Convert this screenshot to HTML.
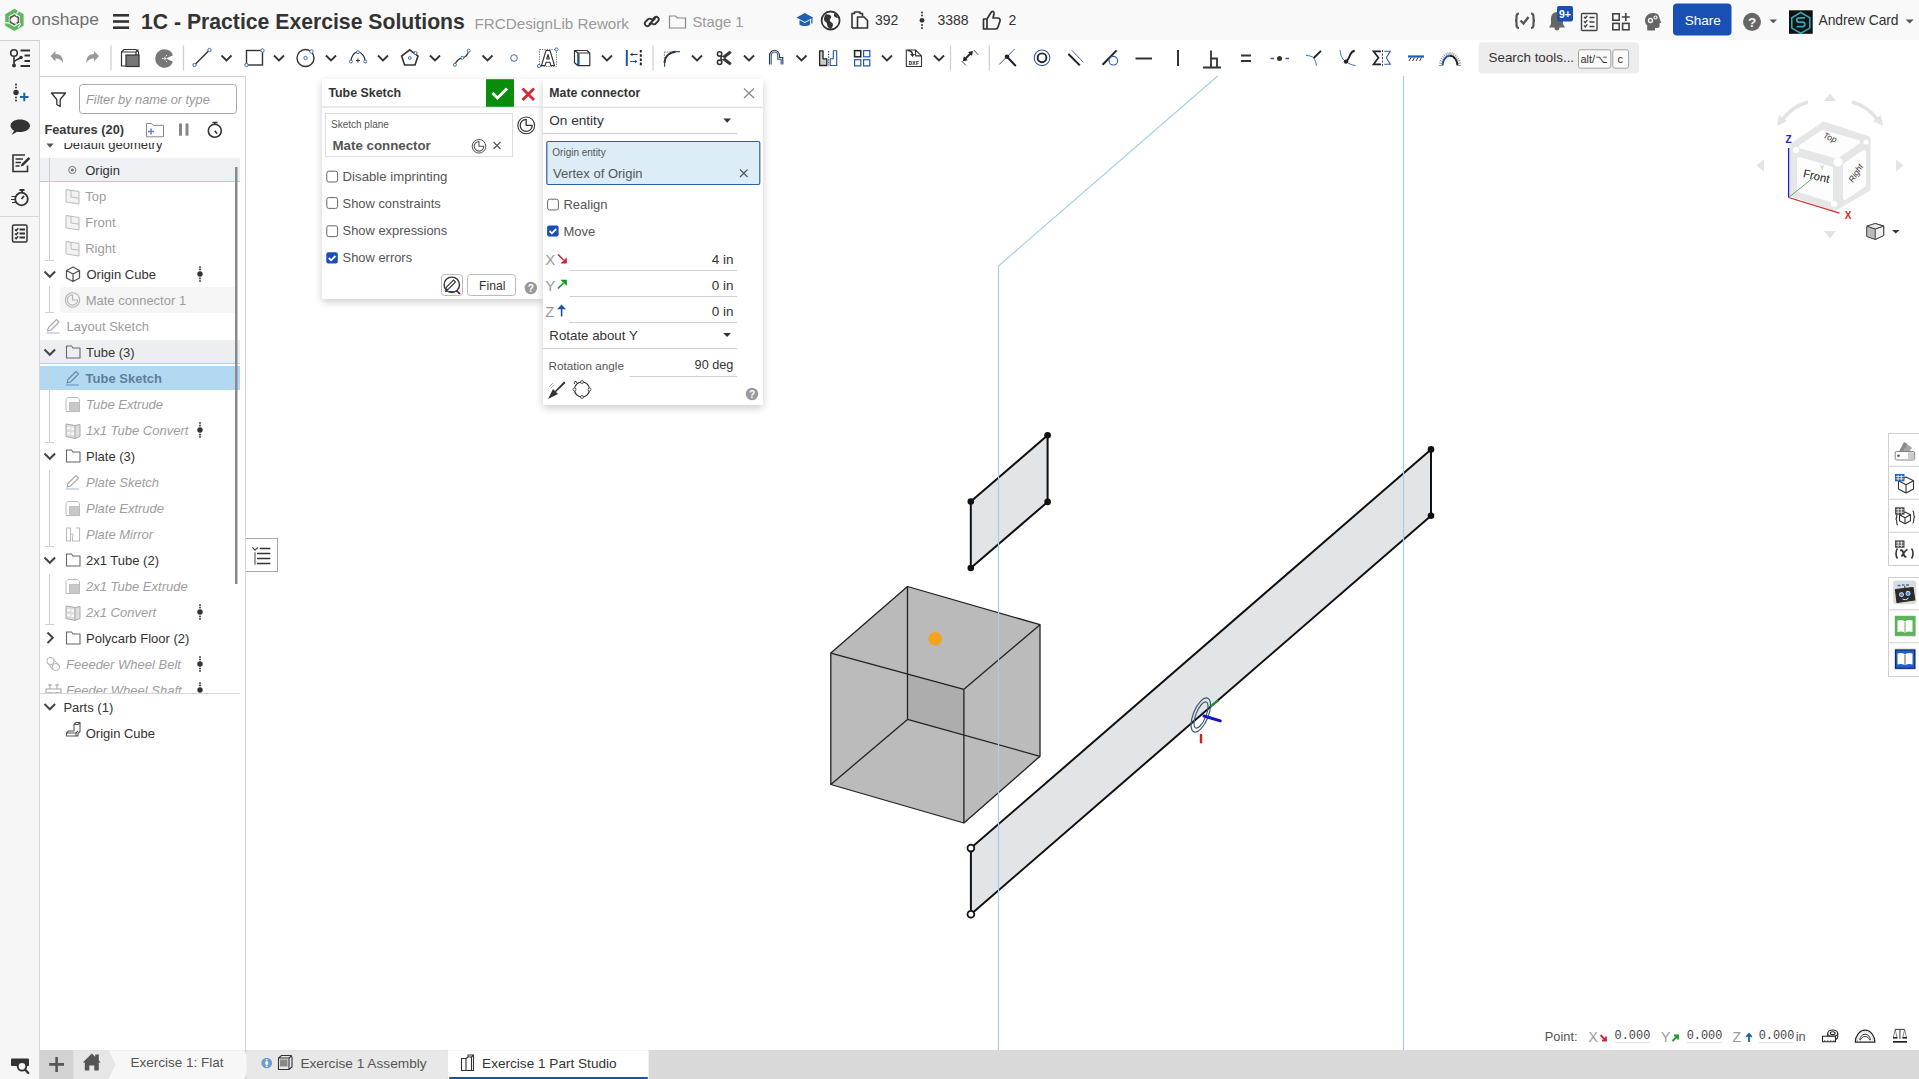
<!DOCTYPE html>
<html><head><meta charset="utf-8">
<style>
*{box-sizing:border-box;margin:0;padding:0}
html,body{width:1919px;height:1079px;overflow:hidden;background:#fff;font-family:"Liberation Sans",sans-serif;color:#333}
.a{position:absolute}
.t{position:absolute;line-height:1;white-space:nowrap}
svg{position:absolute;overflow:visible}
#topbar{left:0;top:0;width:1919px;height:40px;background:#f9f9f9}
#toolrow{left:40px;top:40px;width:1879px;height:36px;background:#fff}
#lstrip{left:0;top:40px;width:40px;height:1039px;background:#f6f6f6;border-right:1px solid #d6d6d6;border-top:1px solid #d0d0d0}
#fpanel{left:40px;top:76px;width:206px;height:974px;background:#fff;border-top:1px solid #d0d0d0;border-right:1px solid #d6d6d6}
#tabbar{left:40px;top:1050px;width:1879px;height:29px;background:#d9d9d9}
.gray{color:#a3a3a3}
.ital{font-style:italic}
.panel{background:#fff;box-shadow:0 3px 8px rgba(0,0,0,0.2)}
</style></head><body>

<!-- viewport drawing -->
<svg width="1919" height="1079" style="left:0;top:0">
  <defs>
    <linearGradient id="cg" x1="0" y1="0" x2="1" y2="1"><stop offset="0" stop-color="#bdbdbd"/><stop offset="1" stop-color="#b5b5b5"/></linearGradient>
  </defs>
  <!-- cube -->
  <g stroke-linejoin="round">
    <path d="M907.5,586.5 L1040,624.7 L1040,756.3 L963.9,823 L830.8,784.5 L830.8,653.1 Z" fill="#bbbbbb"/>
    <path d="M907.5,586.5 L1040,624.7 L963.9,689.3 L830.8,653.1 Z" fill="#bababa"/>
    <path d="M907.5,586.5 L907.5,719.4 L963.9,689.3 Z" fill="#b4b4b4" opacity="0"/>
    <path d="M907.5,673.6 L963.9,689.3 L963.9,735 L907.5,719.4 Z" fill="#adadad"/>
    <g fill="none" stroke="#222" stroke-width="1.3">
      <path d="M907.5,586.5 L1040,624.7 L1040,756.3 L963.9,823 L830.8,784.5 L830.8,653.1 Z"/>
      <path d="M830.8,653.1 L963.9,689.3 L1040,624.7 M963.9,689.3 L963.9,823"/>
      <path d="M907.5,586.5 L907.5,719.4 L830.8,784.5 M907.5,719.4 L1040,756.3"/>
    </g>
    <circle cx="935.2" cy="638.7" r="6.8" fill="#f5a31a"/>
  </g>
  <!-- small parallelogram -->
  <path d="M970.8,501.6 L1047.6,435.3 L1047.6,501.9 L970.8,568 Z" fill="#e2e5e8" stroke="#111" stroke-width="2" stroke-linejoin="round"/>
  <g fill="#111"><circle cx="970.8" cy="501.6" r="3.3"/><circle cx="1047.6" cy="435.3" r="3.3"/><circle cx="1047.6" cy="501.9" r="3.3"/><circle cx="970.8" cy="568" r="3.3"/></g>
  <!-- long plate -->
  <path d="M970.9,848.1 L1431,449.4 L1431,515.8 L970.9,914.3 Z" fill="#e2e5e8" stroke="#111" stroke-width="2" stroke-linejoin="round"/>
  <g fill="#111"><circle cx="1431" cy="449.4" r="3.3"/><circle cx="1431" cy="515.8" r="3.3"/></g>
  <g fill="#fff" stroke="#111" stroke-width="1.8"><circle cx="970.9" cy="848.1" r="3.4"/><circle cx="970.9" cy="914.3" r="3.4"/></g>
  <!-- sketch plane lines -->
  <g stroke="#a6cfe6" stroke-width="1.2" fill="none">
    <polyline points="998.5,1050 998.5,266 1220,74"/>
    <line x1="1403.5" y1="76" x2="1403.5" y2="1050"/>
  </g>
  <!-- mate connector triad -->
  <path d="M1210.2,706.6 L1218.3,700.4" stroke="#1a9a2a" stroke-width="2.4"/>
  <g fill="none" stroke="#3c5a6e" stroke-width="1.2">
    <ellipse cx="1200.8" cy="715" rx="7.5" ry="18.2" transform="rotate(22 1200.8 715)"/>
    <ellipse cx="1201" cy="715" rx="5" ry="14" transform="rotate(22 1201 715)"/>
  </g>
  <path d="M1204,716 L1220.3,720.9" stroke="#1414c8" stroke-width="3" stroke-linecap="round"/>
  <path d="M1201,734 L1201,743.3" stroke="#d02020" stroke-width="2.4"/>
</svg>

<div id="topbar" class="a"></div>
<div id="toolrow" class="a"></div>
<div id="lstrip" class="a"></div>
<div id="fpanel" class="a"></div>
<div id="tabbar" class="a"></div>

<!-- TOPBAR -->
<svg width="1919" height="40" style="left:0;top:0">
  <!-- logo -->
  <g>
    <path d="M14.4,10.9 L21.8,15.2 L21.8,24.6 L14.4,28.9 L7,24.6 L7,15.2 Z" fill="none" stroke="#5cb85c" stroke-width="3.6" stroke-linejoin="miter"/>
    <path d="M16.6,13.6 L19.2,10.2 M4,22.3 L9.5,23.2 M18.3,27.5 L20.8,23.7" stroke="#f9f9f9" stroke-width="1.2"/>
    <path d="M14.4,15.2 L18.4,17.5 L18.4,22.3 L14.4,24.6 L10.4,22.3 L10.4,17.5 Z" fill="none" stroke="#555" stroke-width="1.6"/>
    <path d="M10.4,20 h1.2 M16.2,16 l1,-1.5 M15.5,23.2 l1.3,1.5" stroke="#f9f9f9" stroke-width="1.4"/>
  </g>
  <!-- hamburger -->
  <g fill="#333"><rect x="113" y="14" width="16" height="2.6"/><rect x="113" y="20.2" width="16" height="2.6"/><rect x="113" y="26.4" width="16" height="2.6"/></g>
  <!-- link -->
  <g fill="none" stroke="#333" stroke-width="1.8" stroke-linecap="round">
    <path d="M651,23.5 l-2.2,2.2 a2.6,2.6 0 0 1 -3.6,-3.6 l2.6,-2.6 a2.6,2.6 0 0 1 3.6,0"/>
    <path d="M652.5,19.5 l2.2,-2.2 a2.6,2.6 0 0 1 3.6,3.6 l-2.6,2.6 a2.6,2.6 0 0 1 -3.6,0"/>
    <path d="M649.5,24 l5.5,-5.5"/>
  </g>
  <!-- folder -->
  <path d="M669.5,16 h6 l1.8,2 h8.2 v10 h-16 z" fill="none" stroke="#888" stroke-width="1.2"/>
  <!-- grad cap -->
  <g fill="#1f5fb3">
    <path d="M796.5,17.5 L804.8,13 L813,17.5 L804.8,22 Z"/>
    <path d="M799.5,20 v4.5 c2,2 8.5,2 10.6,0 v-4.5 l-5.3,3 z"/>
    <rect x="811.3" y="17.5" width="1.2" height="6"/>
  </g>
  <!-- globe -->
  <g>
    <circle cx="830.6" cy="20.5" r="9" fill="none" stroke="#333" stroke-width="1.8"/>
    <path d="M826,14 c2,1 4,0 5,2 c1,2 -2,3 -1,5 c1,2 3,1 3,4 c0,2 -2,3 -2,4 c-3,-1 -4,-3 -4,-5 c0,-2 -3,-2 -3,-5 c0,-2 1,-4 2,-5z M834,13 c2,1 4,3 4,5 c-2,0 -3,-1 -4,-2z" fill="#333"/>
  </g>
  <!-- copy -->
  <g fill="none" stroke="#333" stroke-width="1.6" stroke-linejoin="round">
    <path d="M852,28 v-14.5 h2.5 v-1.5 h5.5 v1.5 h2.5 v3"/>
    <path d="M857.5,17 h6.5 l3.5,3.5 v7.5 h-10z"/>
    <path d="M852,28 h5.5"/>
  </g>
  <!-- kebab -->
  <g fill="#333"><circle cx="922" cy="12.5" r="1"/><circle cx="922" cy="15.5" r="1"/><circle cx="922" cy="20.3" r="2.4"/><circle cx="922" cy="25" r="1"/><circle cx="922" cy="28" r="1"/></g>
  <!-- thumbs up -->
  <path d="M983.5,19 h3.5 v10 h-3.5 z M987,19 l4,-6.5 c1,-2 3.5,-1 3,1.5 l-1,4 h5 c1.5,0 2.5,1.5 2,3 l-2,6 c-0.4,1.2 -1.2,2 -2.5,2 h-8.5" fill="none" stroke="#333" stroke-width="1.7" stroke-linejoin="round"/>

  <!-- right icons -->
  <g fill="none" stroke="#555" stroke-width="2.2">
    <path d="M1519,13.5 c-2,0 -2.5,1 -2.5,3 v2.5 c0,1 -1,1.5 -1.5,1.5 c0.5,0 1.5,0.5 1.5,1.5 v3 c0,2 0.5,3 2.5,3"/>
    <path d="M1531,13.5 c2,0 2.5,1 2.5,3 v2.5 c0,1 1,1.5 1.5,1.5 c-0.5,0 -1.5,0.5 -1.5,1.5 v3 c0,2 -0.5,3 -2.5,3"/>
    <path d="M1520.5,20.5 l3,3 l5,-6.5" stroke-width="2.4"/>
  </g>
  <!-- bell -->
  <path d="M1557,12 c-4,0 -6,3 -6,7 v5 l-2,3.5 h16 l-2,-3.5 v-5 c0,-4 -2,-7 -6,-7z M1554.5,27.5 c0,2 1.2,3 2.5,3 c1.3,0 2.5,-1 2.5,-3z" fill="#666"/>
  <rect x="1557" y="6" width="16" height="15.4" rx="2" fill="#1a4fb5"/>
  <text x="1565" y="17.6" font-family="Liberation Sans" font-weight="bold" font-size="10.5" fill="#fff" text-anchor="middle">9+</text>
  <!-- checklist -->
  <g fill="none" stroke="#444" stroke-width="1.4">
    <rect x="1581.5" y="13.5" width="15.5" height="17" rx="1"/>
    <path d="M1584,17 l1.3,1.3 l2,-2.5 M1584,21.3 l1.3,1.3 l2,-2.5 M1584,25.6 l1.3,1.3 l2,-2.5 M1589.5,17.5 h5 M1589.5,22 h5 M1589.5,26.5 h5"/>
  </g>
  <!-- apps -->
  <g fill="none" stroke="#444" stroke-width="1.6">
    <rect x="1612.8" y="13.8" width="6.4" height="6.4"/><rect x="1612.8" y="23.4" width="6.4" height="6.4"/><rect x="1622.6" y="23.4" width="6.4" height="6.4"/>
    <path d="M1625.8,13 v8 M1621.8,17 h8"/>
  </g>
  <!-- head gears -->
  <path d="M1653,13 c-4.5,0 -8,3.3 -8,7.5 c0,2.3 1,3.8 2.2,5 v5 h7.8 v-2.6 h2.6 c1.2,0 2,-0.8 2,-2 v-2.8 l1.8,-0.4 l-1.8,-3.6 c0,-4 -2.6,-6.1 -6.6,-6.1z" fill="#666"/>
  <circle cx="1650.5" cy="20.5" r="2" fill="none" stroke="#f6f6f6" stroke-width="1.4"/>
  <circle cx="1655.5" cy="17.5" r="1.5" fill="none" stroke="#f6f6f6" stroke-width="1.2"/>
  <!-- share -->
  <rect x="1673" y="3.5" width="58.5" height="32" rx="4" fill="#1a4fb5"/>
  <text x="1702.8" y="25.1" font-family="Liberation Sans" font-size="13.6" fill="#fff" text-anchor="middle">Share</text>
  <!-- help -->
  <circle cx="1752" cy="21.8" r="9" fill="#666"/>
  <text x="1752" y="27" font-family="Liberation Sans" font-weight="bold" font-size="13.5" fill="#f6f6f6" text-anchor="middle">?</text>
  <path d="M1769.5,19.5 h7.5 l-3.75,3.8z" fill="#555"/>
  <!-- avatar -->
  <rect x="1789" y="10.3" width="23.7" height="23.5" fill="#111"/>
  <path d="M1800.8,12.5 l9,5.2 v10.4 l-9,5.2 l-9,-5.2 v-10.4z" fill="none" stroke="#2aa9b8" stroke-width="1.6"/>
  <path d="M1805,17.8 h-6 a2.2,2.2 0 0 0 0,4.4 h3.6 a2.2,2.2 0 0 1 0,4.4 h-6" fill="none" stroke="#2aa9b8" stroke-width="1.8"/>
  <path d="M1905.7,19.5 h8 l-4,4z" fill="#555"/>
</svg>

<div class="t" style="left:31.5px;top:10.5px;font-size:17.4px;color:#707070;letter-spacing:0.1px">onshape</div>
<div class="t" style="left:141px;top:11px;font-size:21.2px;font-weight:bold;color:#333">1C - Practice Exercise Solutions</div>
<div class="t" style="left:474.5px;top:15.8px;font-size:15.2px;color:#9a9a9a">FRCDesignLib Rework</div>
<div class="t" style="left:692.5px;top:14.5px;font-size:14.8px;color:#9a9a9a">Stage 1</div>
<div class="t" style="left:875px;top:13.3px;font-size:14px;color:#333">392</div>
<div class="t" style="left:937.5px;top:13.3px;font-size:14px;color:#333">3388</div>
<div class="t" style="left:1008.5px;top:13.3px;font-size:14px;color:#333">2</div>
<div class="t" style="left:1818.5px;top:14px;font-size:13.9px;color:#333;letter-spacing:-0.1px">Andrew Card</div>

<!-- TOOLBAR -->
<svg width="1919" height="40" style="left:0;top:38px" viewBox="0 38 1919 40">
  <!-- feature list icon -->
  <g fill="none" stroke="#333" stroke-width="1.6">
    <circle cx="14" cy="53" r="3.3"/>
    <path d="M14,56.5 v9 M14,62.5 c0,-2 3,-3 6.5,-4.5"/>
    <path d="M20.5,50.5 h9.5 M24.5,55.5 h5.5 M24.5,61 h5.5 M20.5,66 h9.5" stroke-width="1.8"/>
  </g>
  <g fill="#333"><circle cx="14" cy="65.5" r="2"/><circle cx="21" cy="57.5" r="1.8"/></g>
  <!-- undo/redo -->
  <path d="M50.5,56 l5,-5 v3 c5,0 8,3 7.5,9.5 c-1,-3.5 -3.5,-5 -7.5,-5 v3z" fill="#999"/>
  <path d="M99,56 l-5,-5 v3 c-5,0 -8,3 -7.5,9.5 c1,-3.5 3.5,-5 7.5,-5 v3z" fill="#999"/>
  <g stroke="#cfcfcf" stroke-width="1.3"><line x1="111" y1="45.5" x2="111" y2="70.5"/><line x1="183.5" y1="45.5" x2="183.5" y2="70.5"/><line x1="653" y1="45.5" x2="653" y2="70.5"/><line x1="950.5" y1="45.5" x2="950.5" y2="70.5"/><line x1="989.3" y1="45.5" x2="989.3" y2="70.5"/></g>
  <!-- extrude cube -->
  <g stroke="#333" stroke-width="1.2">
    <path d="M121.5,52 l2.5,-2.5 h12 l2.5,2.5 v14 h-17z" fill="#fff"/>
    <rect x="126" y="55" width="13" height="11.5" fill="#777"/>
    <path d="M121.5,52 h14.5 l2.5,-2.5 M136,52 v3" fill="none"/>
  </g>
  <!-- revolve pacman -->
  <path d="M164.5,49.3 a9.2,9.2 0 1 0 8.5,12.5 l-7,-3.3 l7,-3.3 a9.2,9.2 0 0 0 -8.5,-5.9z" fill="#777"/>
  <g fill="none" stroke="#fff" stroke-width="1"><path d="M162,58.5 h10 M167,55 l-3,3.5 l3,3.5" stroke-dasharray="1.5 1"/></g>
  <!-- sketch tools blue handles -->
  <g fill="none" stroke="#333" stroke-width="1.4">
    <line x1="194.5" y1="65" x2="209.5" y2="50"/>
    <rect x="246.5" y="50.5" width="16" height="14.5"/>
    <circle cx="305.5" cy="58" r="8.5"/>
    <path d="M350.9,61.5 c0,-4.5 3,-9.5 7,-9.5 c4,0 7.3,5 7.3,9.5" stroke-width="1.2"/>
    <path d="M409.8,49.8 l8.2,6.2 l-3,9 h-10.4 l-3,-9z" stroke-width="1.6"/>
    <path d="M454.9,64.8 c1.5,-4 4,-6.5 7.4,-7 c3,-0.5 5.5,-2.5 6.4,-7.1" stroke-width="1.2"/>
  </g>
  <g fill="#fff" stroke="#3f6fb0" stroke-width="1">
    <circle cx="194.5" cy="65" r="1.7"/><circle cx="209.5" cy="50" r="1.7"/>
    <circle cx="246.5" cy="65" r="1.7"/><circle cx="262.5" cy="50.5" r="1.7"/>
    <circle cx="305.5" cy="58" r="1.7"/><circle cx="311.5" cy="51.5" r="1.7"/>
    <circle cx="350.9" cy="61.5" r="1.5"/><circle cx="357.9" cy="52.2" r="1.5"/><circle cx="365.2" cy="61.5" r="1.5"/>
    <circle cx="409.8" cy="58" r="1.4"/><circle cx="415.5" cy="53" r="1.5"/>
    <circle cx="454.9" cy="64.8" r="1.5"/><circle cx="462.3" cy="57.8" r="1.5"/><circle cx="468.7" cy="50.7" r="1.5"/>
    <circle cx="514" cy="58" r="3.3"/>
  </g>
  <path d="M357.9,58.5 v4 M355.9,60.5 h4" stroke="#333" stroke-width="1.1"/>
  <!-- chevrons -->
  <g fill="none" stroke="#333" stroke-width="1.8">
    <path d="M221.5,55.5 l5,5 l5,-5"/><path d="M274,55.5 l5,5 l5,-5"/><path d="M326,55.5 l5,5 l5,-5"/><path d="M378,55.5 l5,5 l5,-5"/><path d="M430,55.5 l5,5 l5,-5"/><path d="M482.5,55.5 l5,5 l5,-5"/>
    <path d="M602,55.5 l5,5 l5,-5"/><path d="M692,55.5 l5,5 l5,-5"/><path d="M744,55.5 l5,5 l5,-5"/><path d="M796.5,55.5 l5,5 l5,-5"/><path d="M882,55.5 l5,5 l5,-5"/><path d="M934,55.5 l5,5 l5,-5"/>
  </g>
  <!-- text tool -->
  <rect x="539.5" y="49.5" width="17" height="17" fill="none" stroke="#555" stroke-width="0.8" stroke-dasharray="1.3 1.1"/>
  <path d="M541.5,65.5 L546,50.5 L550,50.5 L554.5,65.5 L550.8,65.5 L550,62.3 L546,62.3 L545.2,65.5 Z M546.7,59 L549.3,59 L548,54.5 Z" fill="#fff" stroke="#333" stroke-width="1.1" stroke-linejoin="round" fill-rule="evenodd"/>
  <circle cx="539" cy="66" r="1.6" fill="#fff" stroke="#3f6fb0" stroke-width="1"/><circle cx="556.5" cy="49.5" r="1.6" fill="#fff" stroke="#3f6fb0" stroke-width="1"/>
  <!-- construction box -->
  <g fill="none" stroke="#333" stroke-width="1.2" stroke-linejoin="round"><path d="M574.5,50.5 h12.5 l2.8,2.5 v12.7 h-11.8 l-3.5,-3 z M574.5,50.5 l3.5,2.5 h11.8 M578,53 v12.7"/></g>
  <path d="M578.6,53.5 v12" stroke="#1f55a8" stroke-width="2"/>
  <!-- mirror -->
  <path d="M626.8,50 v16" stroke="#1f55a8" stroke-width="2"/>
  <path d="M640.8,50 v16" stroke="#222" stroke-width="2" stroke-dasharray="2.6 1.6"/>
  <path d="M632,54.5 h5.5" stroke="#333" stroke-width="1.1"/><path d="M630,54.5 l2.5,-1.8 v3.6z" fill="#333"/>
  <path d="M630,61.5 h5.5" stroke="#1f55a8" stroke-width="1.1"/><path d="M637.5,61.5 l-2.5,-1.8 v3.6z" fill="#1f55a8"/>
  <!-- fillet -->
  <path d="M664.4,52 h7.5 M664.4,52 v6.5" fill="none" stroke="#666" stroke-width="0.9" stroke-dasharray="1.3 1.2"/>
  <path d="M664.6,63 c0,-6 4.5,-11 11.2,-11.3" fill="none" stroke="#333" stroke-width="1.9"/>
  <path d="M675.5,51.7 h4.5 M664.6,62.5 v4.3" stroke="#1f55a8" stroke-width="1.2"/>
  <!-- trim scissors -->
  <g fill="none" stroke="#333" stroke-width="1.6">
    <circle cx="719.6" cy="53.9" r="2.2"/><circle cx="719.6" cy="62.3" r="2.2"/>
  </g>
  <path d="M721.2,55.4 L731.2,63 L729.8,65 L720.6,58z M721.2,60.8 L731.2,53 L729.8,51 L720.6,58z" fill="#333" stroke="#333" stroke-width="0.8" stroke-linejoin="round"/>
  <!-- offset -->
  <g fill="none" stroke-width="1.1">
    <path d="M769.5,64.5 v-8.5 c0,-3.5 2.5,-5.7 5,-5.7 c2.5,0 5,2.2 5,5.2 v2 h3.3 v7" stroke="#333"/>
    <path d="M771.2,64.5 v-8.5 c0,-2.3 1.5,-4 3.3,-4 c1.8,0 3.3,1.7 3.3,3.7 v3.5 h3.3 v5.3" stroke="#1f55a8"/>
  </g>
  <!-- use/convert -->
  <path d="M819.6,50.8 h3.4 v8 h3.8 v6.7 h-7.2z" fill="#ccc" stroke="#222" stroke-width="1.3" stroke-linejoin="round"/>
  <path d="M828.6,51 v14.5" stroke="#333" stroke-width="0.9" stroke-dasharray="1.5 1.2"/>
  <path d="M833.3,50.8 h3.4 v14.7 h-6.5 v-6.7 h3.1z" fill="none" stroke="#1f55a8" stroke-width="1.1" stroke-linejoin="round"/>
  <!-- pattern grid -->
  <g fill="none" stroke="#1f55a8" stroke-width="1.2"><rect x="863.6" y="50.6" width="6.2" height="6.2"/><rect x="854.6" y="59.7" width="6.2" height="6.2"/><rect x="863.6" y="59.7" width="6.2" height="6.2"/></g>
  <rect x="854.6" y="50.6" width="6.2" height="6.2" fill="#eee" stroke="#222" stroke-width="1.5"/>
  <!-- DXF -->
  <path d="M906.3,50 h9.3 l5.9,5.9 v10.6 h-15.2z M915.6,50 v5.9 h5.9" fill="none" stroke="#333" stroke-width="1.1" stroke-linejoin="round"/>
  <path d="M907.5,50.5 c3,0 5,1.5 5,4.5" fill="none" stroke="#333" stroke-width="1.6"/>
  <path d="M910,54 h5 l-2.5,3z" fill="#333"/>
  <text x="914" y="64.6" font-family="Liberation Mono" font-weight="bold" font-size="5.6" fill="#222" text-anchor="middle" letter-spacing="0.2">DXF</text>
  <!-- dimension -->
  <path d="M964.5,59.5 l7,-7" stroke="#222" stroke-width="1.8"/>
  <path d="M962.8,61.3 l1,-5 l4,4z M973,51 l-5,1 l4,4z" fill="#222"/>
  <path d="M961.6,61 l4.4,4.5 M973.8,50 l4.4,4.8" stroke="#333" stroke-width="0.9"/>
  <!-- constraints -->
  <g fill="none" stroke-width="1.6">
    <path d="M999.2,64.5 L1014.7,49" stroke="#2a5db0" stroke-width="1"/><path d="M1007,56.8 L1015.8,66" stroke="#222" stroke-width="2"/>
    <circle cx="1042" cy="57.8" r="7.8" stroke="#2a5db0" stroke-width="1.1"/><circle cx="1042" cy="57.8" r="4.4" stroke="#222" stroke-width="1.9"/>
    <path d="M1068.4,54 L1079.8,65.4" stroke="#222" stroke-width="2"/><path d="M1071.8,50.3 L1083.4,62.3" stroke="#3a4fb0" stroke-width="0.9"/>
    <path d="M1102.6,64.8 L1116.6,50.4" stroke="#222" stroke-width="2"/><circle cx="1113.3" cy="60.7" r="4.3" stroke="#2a5db0" stroke-width="1.1"/>
    <path d="M1135.5,58.5 h16.5" stroke="#333" stroke-width="2"/>
    <path d="M1178,50 v16" stroke="#333" stroke-width="2"/>
    <path d="M1203,67.5 h18 M1211,67.5 v-17 M1211,58.5 h6 v9" stroke="#333" stroke-width="1.8"/>
    <path d="M1241,55.5 h10 M1241,61 h10" stroke="#333" stroke-width="2"/>
    <path d="M1270.5,58.5 h3.5 M1285.5,58.5 h3.5" stroke="#2a5db0" stroke-width="1.3"/>
    <path d="M1306,55.5 c3.5,0 6.5,1 7.7,2.5 c1.5,2 2.2,4.5 2.7,7.7" stroke="#2a5db0" stroke-width="0.9"/><path d="M1313.7,58 L1321,50.9" stroke="#222" stroke-width="1.9"/>
    <path d="M1340.1,50.2 c0.5,6 2.5,10 6,11.5 c2.5,1.5 5,3.5 9.5,3.8" stroke="#2a5db0" stroke-width="0.9"/><path d="M1346,61.6 c2.5,-2 3,-4 4,-6.5 c1,-2.5 2,-4 4.7,-4.4" stroke="#222" stroke-width="1.9"/>
    <path d="M1381,51.3 h-7.5 l5,6.5 l-5,6.5 h7.5" stroke="#222" stroke-width="1.7" stroke-linejoin="miter"/><path d="M1384.3,51.3 h6 l-4,6.5 l4,6.5 h-6" stroke="#2a5db0" stroke-width="1.1"/><path d="M1382.5,50 v16" stroke="#333" stroke-width="0.9" stroke-dasharray="2.2 1.3"/>
    <path d="M1408,56.5 h16" stroke="#1f5fb3" stroke-width="2.2"/><path d="M1409,61 l2,-3.5 M1412.5,61 l2,-3.5 M1416,61 l2,-3.5 M1419.5,61 l2,-3.5" stroke="#333" stroke-width="1"/>
    <path d="M1442.5,65.5 c0,-5.5 3.5,-9.8 7.5,-9.8" stroke="#1f55a8" stroke-width="2"/><path d="M1450,55.7 c4,0 7.5,4.3 7.5,9.8" stroke="#222" stroke-width="2"/>
  </g>
  <circle cx="1279.5" cy="58.5" r="2.5" fill="#333"/><circle cx="1346" cy="61.6" r="2.2" fill="#222"/><circle cx="1007" cy="56.8" r="2.3" fill="#222"/>
  <path d="M1441.9,65.5 L1438.9,65.5 M1442.1,63.5 L1439.1,62.9 M1442.5,61.5 L1439.7,60.4 M1443.3,59.7 L1440.8,58.1 M1444.3,58.1 L1442.2,56.0 M1445.5,56.9 L1443.8,54.4 M1446.9,55.9 L1445.8,53.1 M1448.4,55.3 L1447.8,52.4 M1450.0,55.1 L1450.0,52.1 M1451.6,55.3 L1452.2,52.4 M1453.1,55.9 L1454.2,53.1 M1454.5,56.9 L1456.2,54.4 M1455.7,58.1 L1457.8,56.0 M1456.7,59.7 L1459.2,58.1 M1457.5,61.5 L1460.3,60.4 M1457.9,63.5 L1460.9,62.9 M1458.1,65.5 L1461.1,65.5" stroke="#777" stroke-width="0.8"/>
  <!-- search tools -->
  <rect x="1478.5" y="42.2" width="160.5" height="31.4" rx="4" fill="#ededed"/>
  <rect x="1578.5" y="49.8" width="32.3" height="18.4" rx="2" fill="#fafafa" stroke="#999" stroke-width="0.9"/>
  <rect x="1612.8" y="49.8" width="15.8" height="18.4" rx="2" fill="#fafafa" stroke="#999" stroke-width="0.9"/>
</svg>
<div class="t" style="left:1488.5px;top:51px;font-size:13.4px;color:#333">Search tools...</div>
<div class="t" style="left:1580.5px;top:54px;font-size:11px;color:#333">alt/⌥</div>
<div class="t" style="left:1617.5px;top:53.5px;font-size:11px;color:#333">c</div>

<!-- LEFT STRIP ICONS -->
<svg width="40" height="1079" style="left:0;top:0">
  <g fill="#333">
    <circle cx="16" cy="84.5" r="1"/><circle cx="16" cy="87.5" r="1"/><circle cx="16" cy="92.5" r="2.7"/><circle cx="16" cy="97.5" r="1"/><circle cx="16" cy="100.5" r="1"/>
  </g>
  <path d="M20,97 h8.5 M24.3,92.8 v8.5" stroke="#1f5fb3" stroke-width="2"/>
  <path d="M20,119.5 c5.5,0 10,2.7 10,6.3 c0,3.6 -4.5,6.3 -10,6.3 c-1,0 -2,-0.1 -3,-0.3 l-5.5,3.3 l2.5,-4.3 c-2,-1.2 -3.5,-3 -3.5,-5 c0,-3.6 4,-6.3 9.5,-6.3z" fill="#333"/>
  <g fill="none" stroke="#333" stroke-width="1.6">
    <path d="M25,155 h-12 v16.5 h14.5 v-6"/>
    <path d="M15.5,159 h7.5 M15.5,162.5 h5.5 M15.5,166 h4"/>
  </g>
  <path d="M28.5,157 l1.8,1.8 l-7,7 l-2.6,0.8 l0.8,-2.6z" fill="#333"/>
  <g fill="none" stroke="#333" stroke-width="1.8">
    <circle cx="21.5" cy="199" r="6.3"/>
    <path d="M19.5,190 h5 M22,190 v2.5 M21.5,199 l2.5,-3"/>
  </g>
  <path d="M11.5,196.5 h5 M11,199.5 h4.5 M12,202.5 h4" stroke="#333" stroke-width="1"/>
  <line x1="0" y1="216.5" x2="39" y2="216.5" stroke="#d6d6d6" stroke-width="1"/>
  <g fill="none" stroke="#333" stroke-width="1.5">
    <rect x="12.5" y="225" width="14.5" height="17" rx="1.5"/>
    <path d="M15,229.5 l1.2,1.2 l2,-2.5 M15,233.5 l1.2,1.2 l2,-2.5 M15,237.5 l1.2,1.2 l2,-2.5"/>
  </g>
  <path d="M19.5,229.5 h5.5 M19.5,233.5 h5.5 M19.5,237.5 h5.5" stroke="#333" stroke-width="2"/>
  <!-- bottom search icon -->
  <rect x="11" y="1058.5" width="18" height="7.5" rx="1" fill="#333"/>
  <circle cx="22" cy="1066.3" r="4.3" fill="#f6f6f6" stroke="#333" stroke-width="1.9"/>
  <path d="M25,1069.5 l3.3,3.5" stroke="#333" stroke-width="2.3" stroke-linecap="round"/>
</svg>

<!-- FEATURE PANEL HEADER -->
<svg width="246" height="80" style="left:0;top:76px" viewBox="0 76 246 80">
  <path d="M51.5,93 h14 l-5.3,6.5 v7 l-3.4,-2 v-5z" fill="none" stroke="#333" stroke-width="1.3" stroke-linejoin="round"/>
  <rect x="79.5" y="84.5" width="157" height="29" rx="3" fill="#fff" stroke="#aaa" stroke-width="1"/>
  <path d="M146.5,123.5 h5 l1.5,1.8 h10.5 v11.5 h-17z" fill="none" stroke="#888" stroke-width="1"/>
  <path d="M148,131.5 h6 M151,128.5 v6" stroke="#6b7fd6" stroke-width="1.6"/>
  <rect x="179" y="123.5" width="3" height="12.2" fill="#888"/><rect x="185.5" y="123.5" width="3" height="12.2" fill="#888"/>
  <circle cx="214.8" cy="130.8" r="6.5" fill="none" stroke="#333" stroke-width="1.6"/>
  <path d="M212.5,122.5 h5 M214.8,122.5 v2 M214.8,130.8 l2.3,3" stroke="#333" stroke-width="1.5"/>
</svg>
<div class="t" style="left:86px;top:93.5px;font-size:12.8px;font-style:italic;color:#999">Filter by name or type</div>
<div class="t" style="left:44.4px;top:123.5px;font-size:12.8px;font-weight:bold;color:#3a3a3a">Features (20)</div>

<!-- FEATURE TREE -->
<div class="a" style="left:40px;top:143.4px;width:205px;height:550px;overflow:hidden">
 <div class="a" style="left:-40px;top:-143.4px;width:246px;height:900px">
  <div class="a" style="left:40px;top:158px;width:200px;height:24px;background:#eef0f4;border-bottom:1px solid #a9d3ea"></div>
  <div class="a" style="left:59.5px;top:287px;width:177px;height:25.5px;background:#f5f5f5;border-radius:4px"></div>
  <div class="a" style="left:40px;top:340px;width:200px;height:24px;background:#eceef1;border-bottom:1px solid #a9d3ea"></div>
  <div class="a" style="left:40px;top:366px;width:200px;height:24px;background:#b3d9f2"></div>
  <svg width="246" height="900" style="left:0;top:0">
   <path d="M46.4,143.5 h7.3 l-3.65,4.2z" fill="#555"/>
   <g stroke="#cfcfcf" stroke-width="1" fill="none">
    <path d="M49.5,158 V260.5 M45,260.5 H54"/>
    <path d="M49.5,286 V312.5 M45,312.5 H54"/>
    <path d="M49.5,366 V442.5 M45,442.5 H54"/>
    <path d="M49.5,470 V546.5 M45,546.5 H54"/>
    <path d="M49.5,574 V624.5 M45,624.5 H54"/>
   </g>
   <circle cx="72.3" cy="170" r="3.6" fill="none" stroke="#777" stroke-width="1"/><circle cx="72.3" cy="170" r="1.6" fill="#777"/><path d="M66,189.5 l13,2 v12.5 l-13,-2z" fill="#f2f2f2" stroke="#bbb" stroke-width="1"/><path d="M71,190.3 v6.7 l8,1.2" fill="none" stroke="#bbb" stroke-width="1"/><path d="M66,215.5 l13,2 v12.5 l-13,-2z" fill="#f2f2f2" stroke="#bbb" stroke-width="1"/><path d="M71,216.3 v6.7 l8,1.2" fill="none" stroke="#bbb" stroke-width="1"/><path d="M66,241.5 l13,2 v12.5 l-13,-2z" fill="#f2f2f2" stroke="#bbb" stroke-width="1"/><path d="M71,242.3 v6.7 l8,1.2" fill="none" stroke="#bbb" stroke-width="1"/><path d="M73,267 l6.5,3.5 v7.5 l-6.5,3.5 l-6.5,-3.5 v-7.5z M66.5,270.5 l6.5,3.5 l6.5,-3.5 M73,274 v7.5" fill="none" stroke="#555" stroke-width="1.3" stroke-linejoin="round"/><path d="M44.5,271.5 l5.3,5.3 l5.3,-5.3" fill="none" stroke="#444" stroke-width="2"/><g fill="#333"><circle cx="200" cy="267" r="0.9"/><circle cx="200" cy="269.5" r="0.9"/><circle cx="200" cy="274" r="2.7"/><circle cx="200" cy="278.5" r="0.9"/><circle cx="200" cy="281" r="0.9"/></g><circle cx="72.5" cy="300.0" r="7.2" fill="none" stroke="#b5b5b5" stroke-width="1.1"/><path d="M72.5,294.8 V300.0 H77.7 A5.2,5.2 0 1 1 72.5,294.8 Z" fill="none" stroke="#b5b5b5" stroke-width="1.2" stroke-linejoin="round"/><path d="M47.5,331 l1,-3.5 l8,-8 l2.5,2.5 l-8,8z" fill="none" stroke="#aaa" stroke-width="1.1" stroke-linejoin="round"/><path d="M46.5,333 h13" stroke="#a5b3e0" stroke-width="1"/><path d="M66.5,346 h5 l1.5,2 h7 v10 h-13.5z" fill="none" stroke="#666" stroke-width="1.1" stroke-linejoin="round"/><path d="M44.5,349.5 l5.3,5.3 l5.3,-5.3" fill="none" stroke="#444" stroke-width="2"/><path d="M67,383 l1,-3.5 l8,-8 l2.5,2.5 l-8,8z" fill="none" stroke="#6a8aa3" stroke-width="1.1" stroke-linejoin="round"/><path d="M66,385 h13" stroke="#6a8ac0" stroke-width="1"/><path d="M66,399.5 l2,-2 h9.5 l2,2 v12 h-13.5z" fill="#fff" stroke="#bbb" stroke-width="1"/><rect x="69.5" y="402.5" width="10" height="9" fill="#c8c8c8" stroke="#bbb" stroke-width="0.8"/><path d="M66,424 l9,1.5 l5,-1 v12 l-5,2 l-9,-2z" fill="#ddd" stroke="#aaa" stroke-width="1"/><path d="M75,425.5 v13" stroke="#aaa" stroke-width="1"/><g fill="#fff"><rect x="67.5" y="427" width="2.3" height="2.3"/><rect x="71.5" y="427.5" width="2.3" height="2.3"/><rect x="67.5" y="432" width="2.3" height="2.3"/><rect x="71.5" y="432.5" width="2.3" height="2.3"/></g><g fill="#333"><circle cx="200" cy="423" r="0.9"/><circle cx="200" cy="425.5" r="0.9"/><circle cx="200" cy="430" r="2.7"/><circle cx="200" cy="434.5" r="0.9"/><circle cx="200" cy="437" r="0.9"/></g><path d="M66.5,450 h5 l1.5,2 h7 v10 h-13.5z" fill="none" stroke="#666" stroke-width="1.1" stroke-linejoin="round"/><path d="M44.5,453.5 l5.3,5.3 l5.3,-5.3" fill="none" stroke="#444" stroke-width="2"/><path d="M67,487 l1,-3.5 l8,-8 l2.5,2.5 l-8,8z" fill="none" stroke="#aaa" stroke-width="1.1" stroke-linejoin="round"/><path d="M66,489 h13" stroke="#a5b3e0" stroke-width="1"/><path d="M66,503.5 l2,-2 h9.5 l2,2 v12 h-13.5z" fill="#fff" stroke="#bbb" stroke-width="1"/><rect x="69.5" y="506.5" width="10" height="9" fill="#c8c8c8" stroke="#bbb" stroke-width="0.8"/><path d="M66.5,528 h4 v13 h-4z M72.5,536 v5 h7 v-13 h-3.5" fill="none" stroke="#bbb" stroke-width="1.1"/><path d="M70.5,534 h2.5 v2" fill="none" stroke="#bbb" stroke-width="1"/><path d="M66.5,554 h5 l1.5,2 h7 v10 h-13.5z" fill="none" stroke="#666" stroke-width="1.1" stroke-linejoin="round"/><path d="M44.5,557.5 l5.3,5.3 l5.3,-5.3" fill="none" stroke="#444" stroke-width="2"/><path d="M66,581.5 l2,-2 h9.5 l2,2 v12 h-13.5z" fill="#fff" stroke="#bbb" stroke-width="1"/><rect x="69.5" y="584.5" width="10" height="9" fill="#c8c8c8" stroke="#bbb" stroke-width="0.8"/><path d="M66,606 l9,1.5 l5,-1 v12 l-5,2 l-9,-2z" fill="#ddd" stroke="#aaa" stroke-width="1"/><path d="M75,607.5 v13" stroke="#aaa" stroke-width="1"/><g fill="#fff"><rect x="67.5" y="609" width="2.3" height="2.3"/><rect x="71.5" y="609.5" width="2.3" height="2.3"/><rect x="67.5" y="614" width="2.3" height="2.3"/><rect x="71.5" y="614.5" width="2.3" height="2.3"/></g><g fill="#333"><circle cx="200" cy="605" r="0.9"/><circle cx="200" cy="607.5" r="0.9"/><circle cx="200" cy="612" r="2.7"/><circle cx="200" cy="616.5" r="0.9"/><circle cx="200" cy="619" r="0.9"/></g><path d="M66.5,632 h5 l1.5,2 h7 v10 h-13.5z" fill="none" stroke="#666" stroke-width="1.1" stroke-linejoin="round"/><path d="M47.5,632.5 l5.3,5.3 l-5.3,5.3" fill="none" stroke="#444" stroke-width="2"/><g fill="none" stroke="#bbb" stroke-width="1.1"><circle cx="50.5" cy="661" r="3.5"/><circle cx="56" cy="667" r="3.5"/><path d="M47.5,662.5 l5.5,7.5 M53.5,659 l5.5,7"/></g><g fill="#333"><circle cx="200" cy="657" r="0.9"/><circle cx="200" cy="659.5" r="0.9"/><circle cx="200" cy="664" r="2.7"/><circle cx="200" cy="668.5" r="0.9"/><circle cx="200" cy="671" r="0.9"/></g><g fill="none" stroke="#aaa" stroke-width="1.1"><circle cx="50" cy="695" r="2.3"/><circle cx="57" cy="695" r="2.3"/><rect x="46" y="689" width="15" height="4"/><path d="M50,684 v5 M57,684 v5 M48,685 h4 M55,685 h4"/></g><g fill="#333"><circle cx="200" cy="683" r="0.9"/><circle cx="200" cy="685.5" r="0.9"/><circle cx="200" cy="690" r="2.7"/><circle cx="200" cy="694.5" r="0.9"/><circle cx="200" cy="697" r="0.9"/></g>
   <rect x="235" y="167" width="2.5" height="417" fill="#8a8a8a"/>
  </svg>
  <div class="t" style="left:63.4px;top:137.8px;font-size:13px;color:#333">Default geometry</div>
  <div class="t" style="left:85.2px;top:163.8px;font-size:13px;color:#333">Origin</div><div class="t" style="left:85.2px;top:189.8px;font-size:13px;color:#9d9d9d">Top</div><div class="t" style="left:85.2px;top:215.8px;font-size:13px;color:#9d9d9d">Front</div><div class="t" style="left:85.2px;top:241.8px;font-size:13px;color:#9d9d9d">Right</div><div class="t" style="left:86.5px;top:267.8px;font-size:13px;color:#333">Origin Cube</div><div class="t" style="left:85.7px;top:293.8px;font-size:13px;color:#9d9d9d">Mate connector 1</div><div class="t" style="left:66.5px;top:319.8px;font-size:13px;color:#9d9d9d">Layout Sketch</div><div class="t" style="left:86px;top:345.8px;font-size:13px;color:#333">Tube (3)</div><div class="t" style="left:85.6px;top:371.8px;font-size:13px;color:#5d7f98;font-weight:bold">Tube Sketch</div><div class="t" style="left:86px;top:397.8px;font-size:13px;color:#9d9d9d;font-style:italic">Tube Extrude</div><div class="t" style="left:86px;top:423.8px;font-size:13px;color:#9d9d9d;font-style:italic">1x1 Tube Convert</div><div class="t" style="left:86px;top:449.8px;font-size:13px;color:#333">Plate (3)</div><div class="t" style="left:86px;top:475.8px;font-size:13px;color:#9d9d9d;font-style:italic">Plate Sketch</div><div class="t" style="left:86px;top:501.8px;font-size:13px;color:#9d9d9d;font-style:italic">Plate Extrude</div><div class="t" style="left:86px;top:527.8px;font-size:13px;color:#9d9d9d;font-style:italic">Plate Mirror</div><div class="t" style="left:86px;top:553.8px;font-size:13px;color:#333">2x1 Tube (2)</div><div class="t" style="left:86px;top:579.8px;font-size:13px;color:#9d9d9d;font-style:italic">2x1 Tube Extrude</div><div class="t" style="left:86px;top:605.8px;font-size:13px;color:#9d9d9d;font-style:italic">2x1 Convert</div><div class="t" style="left:86px;top:631.8px;font-size:13px;color:#333">Polycarb Floor (2)</div><div class="t" style="left:66px;top:657.8px;font-size:13px;color:#9d9d9d;font-style:italic">Feeeder Wheel Belt</div><div class="t" style="left:66px;top:683.8px;font-size:13px;color:#9d9d9d;font-style:italic">Feeder Wheel Shaft</div>
 </div>
</div>
<div class="a" style="left:40px;top:693px;width:200px;height:1px;background:#d6d6d6"></div>
<svg width="246" height="60" style="left:0;top:690px" viewBox="0 690 246 60">
  <path d="M44.5,704 l5.3,5.3 l5.3,-5.3" fill="none" stroke="#444" stroke-width="2"/>
  <path d="M66.5,733 l2,-2 h5.5 v-6.5 l2,-2 h4 v9 l-2,2 v2.5 h-11.5z M66.5,733 h9.5 l2,-2 M76,733 v2.5 M74,731 v-6.5 h4 l2,-2" fill="none" stroke="#555" stroke-width="1.1" stroke-linejoin="round"/>
</svg>
<div class="t" style="left:63.4px;top:701.4px;font-size:13px;color:#333">Parts (1)</div>
<div class="t" style="left:85.7px;top:727px;font-size:13px;color:#333">Origin Cube</div>
<!-- list toggle -->
<div class="a" style="left:245.5px;top:538px;width:32.5px;height:34px;background:#fff;border:1px solid #a8a8a8;border-left:none"></div>
<svg width="40" height="40" style="left:245px;top:538px" viewBox="245 538 40 40">
  <path d="M252.3,547.3 l2.8,2.8 l2.8,-2.8" fill="none" stroke="#444" stroke-width="1.2"/>
  <path d="M255,552.3 v12.5" stroke="#888" stroke-width="1.6"/>
  <path d="M260.3,548.5 h9.5 M257.5,553.5 h12.3 M257.5,558.5 h12.3 M257.5,563.5 h12.3" stroke="#333" stroke-width="1.3" stroke-linecap="round"/>
</svg>

<!-- TUBE SKETCH PANEL -->
<div class="a panel" style="left:322px;top:79px;width:220.5px;height:219.5px"></div>
<div class="a panel" style="left:542.5px;top:79px;width:220.5px;height:325.5px"></div>
<svg width="460" height="340" style="left:315px;top:75px" viewBox="315 75 460 340">
  <line x1="322" y1="107" x2="542" y2="107" stroke="#d8d8d8" stroke-width="1"/>
  <rect x="486" y="79.2" width="28" height="27.6" fill="#078c0b"/>
  <path d="M492.5,93 l5,5 l9.5,-9.5" fill="none" stroke="#fff" stroke-width="3"/>
  <path d="M522.5,88.5 l11.5,11.5 M534,88.5 l-11.5,11.5" stroke="#cc2b35" stroke-width="2.8"/>
  <rect x="325.5" y="113.5" width="187" height="43" fill="#fff" stroke="#ddd" stroke-width="1"/>
  <!-- mc icons -->
<circle cx="526.2" cy="125.4" r="8.4" fill="none" stroke="#333" stroke-width="1.1"/><path d="M526.2,119.4 V125.4 H532.2 A6,6 0 1 1 526.2,119.4 Z" fill="none" stroke="#333" stroke-width="1.3" stroke-linejoin="round"/><circle cx="479" cy="146.3" r="6.8" fill="none" stroke="#555" stroke-width="1"/><path d="M479,141.5 V146.3 H483.8 A4.8,4.8 0 1 1 479,141.5 Z" fill="none" stroke="#555" stroke-width="1.1" stroke-linejoin="round"/>
  <path d="M493.5,142 l7,7 M500.5,142 l-7,7" stroke="#555" stroke-width="1.2"/>
  <!-- checkboxes -->
  <g fill="#fff" stroke="#666" stroke-width="1">
    <rect x="326.8" y="171.2" width="10.8" height="10.8" rx="2"/>
    <rect x="326.8" y="197.6" width="10.8" height="10.8" rx="2"/>
    <rect x="326.8" y="225.8" width="10.8" height="10.8" rx="2"/>
  </g>
  <rect x="326.3" y="252.3" width="11.5" height="11.3" rx="2" fill="#1a4fb5"/>
  <path d="M328.8,258 l2.3,2.3 l4.3,-4.3" fill="none" stroke="#fff" stroke-width="1.8"/>
  <!-- sketch icon btn + Final -->
  <rect x="441.5" y="274.5" width="21" height="21" rx="3" fill="#fff" stroke="#bbb" stroke-width="1"/>
  <circle cx="451.8" cy="284.8" r="7.7" fill="none" stroke="#333" stroke-width="1.4"/>
  <path d="M445.5,290 l3,-1 l7,-7 l-2,-2 l-7,7z" fill="none" stroke="#333" stroke-width="1.1"/>
  <path d="M445,291.5 h13 M456.5,291 l3,3" stroke="#1a4fb5" stroke-width="1"/>
  <path d="M457,291 l3,3" stroke="#333" stroke-width="1.6"/>
  <rect x="467.5" y="274.5" width="48" height="21" rx="3" fill="#fff" stroke="#bbb" stroke-width="1"/>
  <circle cx="530.8" cy="288" r="6.2" fill="#999"/>
  <text x="530.8" y="292" font-family="Liberation Sans" font-weight="bold" font-size="10" fill="#fff" text-anchor="middle">?</text>

  <!-- MATE CONNECTOR -->
  <line x1="542.5" y1="107.3" x2="763" y2="107.3" stroke="#d8d8d8" stroke-width="1"/>
  <path d="M744,88.5 l10,9.5 M754,88.5 l-10,9.5" stroke="#888" stroke-width="1.2"/>
  <path d="M723.4,118.5 h7.6 l-3.8,4.3z" fill="#333"/>
  <line x1="542.5" y1="133.5" x2="737.5" y2="133.5" stroke="#d0d0d0" stroke-width="1"/>
  <rect x="546.8" y="141.5" width="213" height="43" rx="1.5" fill="#dcedf8" stroke="#2d5ea8" stroke-width="1.2"/>
  <path d="M740,169.5 l7.5,7.5 M747.5,169.5 l-7.5,7.5" stroke="#555" stroke-width="1.2"/>
  <rect x="547.6" y="199.2" width="10.8" height="10.8" rx="2" fill="#fff" stroke="#666" stroke-width="1"/>
  <rect x="547.1" y="225.6" width="11.5" height="11" rx="2" fill="#1a4fb5"/>
  <path d="M549.6,231 l2.3,2.3 l4.3,-4.3" fill="none" stroke="#fff" stroke-width="1.8"/>
  <!-- axis arrows -->
  <path d="M558,254.5 l5.5,5.5" stroke="#c8283a" stroke-width="1.6"/>
  <path d="M566.8,257.2 v6.3 h-6.3z" fill="#c8283a"/>
  <path d="M558,288.5 l5.5,-5.5" stroke="#109a1a" stroke-width="1.6"/>
  <path d="M566.8,279.8 v6.3 l-6.3,-6.3z" fill="#109a1a"/>
  <path d="M561.6,316.5 v-9" stroke="#1f55a8" stroke-width="1.6"/>
  <path d="M557.2,309.3 l4.4,-4.8 l4.4,4.8z" fill="#1f55a8"/>
  <g stroke="#d0d0d0" stroke-width="1">
    <line x1="569.5" y1="270.5" x2="737" y2="270.5"/>
    <line x1="569.5" y1="296.5" x2="737" y2="296.5"/>
    <line x1="569.5" y1="322.5" x2="737" y2="322.5"/>
    <line x1="542.5" y1="348.5" x2="737" y2="348.5"/>
    <line x1="629.5" y1="376.5" x2="737" y2="376.5"/>
  </g>
  <path d="M723.2,333 h7.8 l-3.9,4z" fill="#333"/>
  <!-- bottom icons -->
  <path d="M548,399 l5,-10 l2,2 l9,-9.5 l1.5,1.5 l-9.5,9 l2,2z" fill="#333"/>
  <path d="M549,387 l4,-4 M551,388 l3,-3" stroke="#999" stroke-width="0.8"/>
  <circle cx="582" cy="389.5" r="7.5" fill="none" stroke="#333" stroke-width="1.2"/>
  <g fill="#fff" stroke="#333" stroke-width="0.8"><circle cx="582" cy="382" r="1.5"/><circle cx="589.5" cy="389.5" r="1.5"/><circle cx="582" cy="397" r="1.5"/><circle cx="574.5" cy="389.5" r="1.5"/></g>
  <path d="M574,384 l1.5,-3 l2,2.5" fill="none" stroke="#333" stroke-width="1"/>
  <circle cx="752" cy="394" r="6.2" fill="#999"/>
  <text x="752" y="398" font-family="Liberation Sans" font-weight="bold" font-size="10" fill="#fff" text-anchor="middle">?</text>
</svg>
<div class="t" style="left:328.4px;top:86.8px;font-size:12.4px;font-weight:bold;color:#333">Tube Sketch</div>
<div class="t" style="left:331px;top:119.6px;font-size:10px;color:#555">Sketch plane</div>
<div class="t" style="left:332.5px;top:138.8px;font-size:13.3px;font-weight:bold;color:#555">Mate connector</div>
<div class="t" style="left:342.6px;top:170px;font-size:13.2px;color:#555">Disable imprinting</div>
<div class="t" style="left:342.6px;top:198px;font-size:12.9px;color:#555">Show constraints</div>
<div class="t" style="left:342.6px;top:225px;font-size:12.9px;color:#555">Show expressions</div>
<div class="t" style="left:342.6px;top:252px;font-size:12.9px;color:#555">Show errors</div>
<div class="t" style="left:479px;top:279.5px;font-size:12.2px;color:#333">Final</div>

<div class="t" style="left:549.3px;top:87.4px;font-size:12.3px;font-weight:bold;color:#333">Mate connector</div>
<div class="t" style="left:549.3px;top:114.4px;font-size:13.6px;color:#333">On entity</div>
<div class="t" style="left:552.3px;top:147.5px;font-size:10px;color:#555">Origin entity</div>
<div class="t" style="left:553px;top:166.8px;font-size:13px;color:#555">Vertex of Origin</div>
<div class="t" style="left:563.4px;top:197.6px;font-size:13px;color:#555">Realign</div>
<div class="t" style="left:563.4px;top:224.6px;font-size:13px;color:#555">Move</div>
<div class="t" style="left:545.3px;top:251.6px;font-size:15px;color:#999">X</div>
<div class="t" style="left:545.3px;top:277.6px;font-size:15px;color:#999">Y</div>
<div class="t" style="left:545.3px;top:303.6px;font-size:15px;color:#999">Z</div>
<div class="t" style="right:1185.6px;top:253px;font-size:13.5px;color:#333">4 in</div>
<div class="t" style="right:1185.6px;top:279px;font-size:13.5px;color:#333">0 in</div>
<div class="t" style="right:1185.6px;top:305px;font-size:13.5px;color:#333">0 in</div>
<div class="t" style="left:549.3px;top:329px;font-size:13.3px;color:#333">Rotate about Y</div>
<div class="t" style="left:548.5px;top:360px;font-size:11.7px;color:#555">Rotation angle</div>
<div class="t" style="right:1185.6px;top:359px;font-size:12.7px;color:#333">90 deg</div>

<!-- TAB BAR -->
<svg width="1919" height="30" style="left:0;top:1049px" viewBox="0 1049 1919 30">
  <rect x="40" y="1050" width="33.4" height="29" fill="#d2d2d2"/>
  <path d="M56.6,1057 v15 M49.2,1064.4 h14.8" stroke="#555" stroke-width="2.6"/>
  <path d="M73.4,1050.3 h35 l7,14.2 l-7,14.5 h-35z" fill="#e6e6e6"/>
  <path d="M108.4,1050.3 h135.6 l7,14.2 l-7,14.5 h-135.6 l7,-14.5z" fill="#f7f7f7"/>
  <path d="M82.8,1062.5 l9,-9 l3.5,3.5 v-2.5 h3.5 v6 l2,2 h-2 v8.1 h-4.5 v-5 h-5 v5 h-4.5 v-8.1z" fill="#555"/>
  <rect x="246.4" y="1050.3" width="201.6" height="28.7" rx="2" fill="#e8e8e8"/>
  <rect x="448" y="1050.3" width="200.6" height="28.7" fill="#fff"/>
  <rect x="449" y="1077" width="199" height="2" rx="1" fill="#1a4fb5"/>
  <circle cx="266.7" cy="1063" r="5.3" fill="#6a9ad6"/>
  <path d="M266.7,1059 v1.5 M266.7,1065.5 v1.5" stroke="#fff" stroke-width="1.6"/>
  <rect x="265.2" y="1061" width="3" height="4" rx="1.5" fill="#fff"/>
  <g fill="none" stroke="#333" stroke-width="1.1">
    <path d="M278.5,1058 l3,-2.5 h9 l1.5,1.5 v10 l-3,2.5 h-10.5z M278.5,1058 h10.5 v11.5 M289,1058 l3,-2.5"/>
  </g>
  <rect x="280" y="1059.5" width="7.5" height="7" fill="#888"/>
  <g fill="none" stroke="#333" stroke-width="1.1">
    <path d="M461.5,1058.5 h4.5 v12 h-4.5z M466,1058.5 l2,-1.5 h3.5 v13.5 h-5.5 M468,1057 v-2 h5.5 v15.5 h-2 M473.5,1055 l-2,2"/>
  </g>
  <!-- coordinates -->
  <path d="M1600.5,1035 l5,5 M1606,1036.5 v4 h-4" stroke="#c8283a" stroke-width="1.8" fill="none"/>
  <path d="M1672.5,1041 l5,-5 M1674,1035.5 h4 v4" stroke="#1b9a2b" stroke-width="1.8" fill="none"/>
  <path d="M1749,1042 v-8 M1746.3,1036.8 l2.7,-3 l2.7,3" stroke="#1f5fb3" stroke-width="1.8" fill="none"/>
  <g stroke="#d8d8d8" stroke-width="0.8"><line x1="1614.6" y1="1042.6" x2="1649.6" y2="1042.6"/><line x1="1686.7" y1="1042.6" x2="1721.8" y2="1042.6"/><line x1="1758.7" y1="1042.6" x2="1793.7" y2="1042.6"/></g>
  <!-- tape measure -->
  <g fill="#fff" stroke="#222" stroke-width="1.1">
    <path d="M1827.7,1033.2 v3.5 c0,2 2.2,3 5,3 c2.8,0 5,-1 5,-3 v-3.5"/>
    <ellipse cx="1832.7" cy="1033.2" rx="5" ry="3.2"/>
    <ellipse cx="1832.7" cy="1033.2" rx="2.4" ry="1.4"/>
    <path d="M1822.5,1036.3 h13 v5.4 h-13z"/>
  </g>
  <path d="M1824.8,1041.5 v-1.5 M1827.8,1041.5 v-1.5 M1830.8,1041.5 v-1.5 M1833.8,1041.5 v-1.5" stroke="#222" stroke-width="0.7"/>
  <!-- protractor -->
  <path d="M1855.3,1042.2 c0,-6.5 4.4,-12 9.8,-12 c5.4,0 9.8,5.5 9.8,12z" fill="#fff" stroke="#222" stroke-width="1.2" stroke-linejoin="round"/>
  <path d="M1859.8,1040 c0,-3 2.3,-5.8 5.3,-5.8 c3,0 5.3,2.8 5.3,5.8 c-1,0 -1.7,-1.5 -2,-2 c-0.8,-1.2 -2,-1.5 -3.3,-1.5 c-1.3,0 -2.5,0.3 -3.3,1.5 c-0.3,0.5 -1,2 -2,2z" fill="none" stroke="#333" stroke-width="1"/>
  <path d="M1857.5,1041 c0,-5 3,-9.3 7.6,-9.3 c4.6,0 7.6,4.3 7.6,9.3" fill="none" stroke="#999" stroke-width="0.8" stroke-dasharray="0.8 1"/>
  <!-- scale -->
  <path d="M1895.2,1029.4 h9.4 M1899.9,1029.4 v9.6" stroke="#333" stroke-width="1"/>
  <path d="M1899.9,1029.8 v9" stroke="#999" stroke-width="0.9"/>
  <path d="M1895.2,1029.6 l-1.8,7.6 M1895.2,1029.6 l1.8,7.6 M1904.6,1029.6 l-1.8,7.6 M1904.6,1029.6 l1.8,7.6" stroke="#333" stroke-width="0.6"/>
  <rect x="1893" y="1037" width="4.5" height="1.6" fill="#222"/><rect x="1902.4" y="1037" width="4.5" height="1.6" fill="#222"/>
  <rect x="1893" y="1041" width="14" height="1.7" fill="#222"/>
</svg>
<div class="t" style="left:130.5px;top:1056.3px;font-size:13.5px;color:#555">Exercise 1: Flat</div>
<div class="t" style="left:300.4px;top:1057px;font-size:13.7px;color:#555">Exercise 1 Assembly</div>
<div class="t" style="left:482.1px;top:1057px;font-size:13.6px;color:#333">Exercise 1 Part Studio</div>
<div class="t" style="left:1544.8px;top:1031px;font-size:12.8px;color:#555">Point:</div>
<div class="t" style="left:1588.4px;top:1030px;font-size:14px;color:#999">X</div>
<div class="t" style="left:1661px;top:1030px;font-size:14px;color:#999">Y</div>
<div class="t" style="left:1732.5px;top:1030px;font-size:14px;color:#999">Z</div>
<div class="t" style="left:1614.6px;top:1031px;font-size:11.9px;font-family:'Liberation Mono',monospace;color:#444">0.000</div>
<div class="t" style="left:1686.7px;top:1031px;font-size:11.9px;font-family:'Liberation Mono',monospace;color:#444">0.000</div>
<div class="t" style="left:1758.7px;top:1031px;font-size:11.9px;font-family:'Liberation Mono',monospace;color:#444">0.000</div>
<div class="t" style="left:1795.7px;top:1031px;font-size:12.8px;color:#555">in</div>

<!-- RIGHT SIDE ICONS -->
<div class="a" style="left:1888px;top:433px;width:32px;height:133px;background:#fff;border:1px solid #cfcfcf;border-right:none"></div>
<div class="a" style="left:1888px;top:576.5px;width:32px;height:100px;background:#fff;border:1px solid #cfcfcf;border-right:none"></div>
<svg width="32" height="250" style="left:1887px;top:430px" viewBox="1887 430 32 250">
  <g stroke="#cfcfcf" stroke-width="1"><line x1="1888" y1="466.3" x2="1919" y2="466.3"/><line x1="1888" y1="499.3" x2="1919" y2="499.3"/><line x1="1888" y1="532.3" x2="1919" y2="532.3"/><line x1="1888" y1="609.8" x2="1919" y2="609.8"/><line x1="1888" y1="642.8" x2="1919" y2="642.8"/></g>
  <!-- appearance swatch -->
  <path d="M1895.5,458.5 l8.5,-16.5 l3.5,2 l-6,14.5z" fill="#8a8a8a"/>
  <path d="M1897.5,458.5 l10,-14 l4.5,3.5 l-8,10.5z" fill="#a5a5a5"/>
  <rect x="1895.2" y="451.5" width="19.5" height="8.5" rx="1.5" fill="#fff" stroke="#777" stroke-width="0.9"/>
  <rect x="1908" y="452.3" width="6" height="7" fill="#ccc"/>
  <circle cx="1898.5" cy="455.7" r="1.3" fill="#555"/>
  <!-- cube with blue grid -->
  <g fill="#fff" stroke="#333" stroke-width="1.1" stroke-linejoin="round"><path d="M1906,477 l7.5,3.8 v8.2 l-7.5,4 l-7.5,-4 v-8.2z"/><path d="M1898.5,480.8 l7.5,4 l7.5,-4 M1906,484.8 v8.2" fill="none"/></g>
  <rect x="1895" y="474" width="9.5" height="7.3" fill="#1f5fb3"/><path d="M1895.8,476.43 h7.9 M1898.17,474.8 v5.699999999999999" stroke="#fff" stroke-width="0.8"/><path d="M1895.8,478.87 h7.9 M1901.33,474.8 v5.699999999999999" stroke="#fff" stroke-width="0.8"/>
  <!-- cube braces -->
  <g fill="#fff" stroke="#333" stroke-width="1.1" stroke-linejoin="round"><path d="M1905,512 l5.5,2.8 v6 l-5.5,3 l-5.5,-3 v-6z"/><path d="M1899.5,514.8 l5.5,3 l5.5,-3 M1905,517.8 v6" fill="none"/></g>
  <path d="M1898,513 c-1.3,0 -1.3,1 -1.3,3.5 c0,2 -0.8,2.5 -1.3,2.5 c0.5,0 1.3,0.5 1.3,2.5 c0,2.5 0,3.5 1.3,3.5 M1912.5,511 c1.3,0 1.3,1 1.3,3.5 c0,2 0.8,2.5 1.3,2.5 c-0.5,0 -1.3,0.5 -1.3,2.5 c0,2.5 0,3.5 -1.3,3.5" fill="none" stroke="#333" stroke-width="1.1"/>
  <rect x="1895" y="507.3" width="9.5" height="7.3" fill="#444"/><path d="M1895.8,509.73 h7.9 M1898.17,508.1 v5.699999999999999" stroke="#fff" stroke-width="0.8"/><path d="M1895.8,512.17 h7.9 M1901.33,508.1 v5.699999999999999" stroke="#fff" stroke-width="0.8"/>
  <!-- grid (x) -->
  <rect x="1895" y="540.4" width="9.5" height="7.3" fill="#444"/><path d="M1895.8,542.83 h7.9 M1898.17,541.1999999999999 v5.699999999999999" stroke="#fff" stroke-width="0.8"/><path d="M1895.8,545.27 h7.9 M1901.33,541.1999999999999 v5.699999999999999" stroke="#fff" stroke-width="0.8"/>
  <path d="M1897.5,548.5 c-2,2 -2,8 0,10 M1911.5,548.5 c2,2 2,8 0,10" fill="none" stroke="#333" stroke-width="1.6"/>
  <path d="M1900,550.5 c2.5,-1 3,1 3.5,3 c0.5,2 1,4 3,3 M1907.5,549.5 c-2,0.5 -4,4 -6,7" fill="none" stroke="#333" stroke-width="1.8"/>
  <!-- robot -->
  <rect x="1893.1" y="580.6" width="23.2" height="23.7" rx="3" fill="#dcdcdc"/>
  <path d="M1895.5,589.5 L1913,587.5 L1914.8,600 L1897,602.5 Z" fill="#2b2b2b" stroke="#2b2b2b" stroke-width="1.2" stroke-linejoin="round"/>
  <circle cx="1901.5" cy="594.6" r="2.4" fill="#fff"/><circle cx="1901.5" cy="594.6" r="1.7" fill="#3d8fe0"/>
  <circle cx="1908" cy="593.4" r="2.4" fill="#fff"/><circle cx="1908" cy="593.4" r="1.7" fill="#3d8fe0"/>
  <path d="M1902.5,599 c2,1 4,1 6,-1" fill="none" stroke="#fff" stroke-width="0.9"/>
  <path d="M1897.5,585.5 h3 M1902,585 h2.5 M1906,585 h3" stroke="#4a6fc0" stroke-width="1.6"/>
  <path d="M1904.8,586 v3" stroke="#333" stroke-width="1"/>
  <!-- books -->
  <rect x="1894.3" y="615.2" width="21.8" height="21.5" rx="1.5" fill="#e0e0e0"/>
  <rect x="1895" y="616" width="20.4" height="19.9" fill="#5ab55a"/>
  <path d="M1897.5,620.5 c2.5,-0.8 5,-0.8 7.5,0.8 c2.5,-1.6 5,-1.6 7.5,-0.8 v11.5 c-2.5,-0.8 -5,-0.8 -7.5,0.8 c-2.5,-1.6 -5,-1.6 -7.5,-0.8z" fill="#fff"/>
  <path d="M1905,621.5 v11" stroke="#5ab55a" stroke-width="1"/>
  <rect x="1894.3" y="648.6" width="21.8" height="21.2" rx="1.5" fill="#d0d0d0"/>
  <rect x="1895" y="649.4" width="20.4" height="19.5" fill="#0f2a66"/>
  <rect x="1896.2" y="650.6" width="18" height="17.1" fill="#1f5fd6"/>
  <path d="M1897.5,653.5 c2.5,-0.8 5,-0.8 7.5,0.8 c2.5,-1.6 5,-1.6 7.5,-0.8 v11 c-2.5,-0.8 -5,-0.8 -7.5,0.8 c-2.5,-1.6 -5,-1.6 -7.5,-0.8z" fill="#fff"/>
  <path d="M1905,654.5 v10.5" stroke="#777" stroke-width="1.2"/>
</svg>

<!-- VIEW CUBE -->
<svg width="200" height="200" style="left:1740px;top:80px" viewBox="1740 80 200 200">
  <g fill="#e3e3e3">
    <path d="M1824,101 l6,-7.5 l6,7.5z"/>
    <path d="M1824,231 l6,7.5 l6,-7.5z"/>
    <path d="M1756.5,165.4 l7.5,-6 v12z"/>
    <path d="M1903.5,165.4 l-7.5,-6 v12z"/>
  </g>
  <g fill="none" stroke="#e3e3e3" stroke-width="3.5">
    <path d="M1808,102 c-11,3 -19,9 -25,17"/>
    <path d="M1852,102 c11,3 19,9 25,17"/>
  </g>
  <g fill="#e3e3e3"><path d="M1777,126 l2,-11 l8,6z"/><path d="M1883,126 l-2,-11 l-8,6z"/></g>
  <!-- cube frame -->
  <path d="M1824,124 L1868,138.5 L1868,189 L1834,208.5 L1791.5,194 L1791.5,146 Z" fill="#e5e6e8" stroke="#e5e6e8" stroke-width="5" stroke-linejoin="round"/>
  <g fill="#fdfdfd" stroke="#fdfdfd" stroke-width="4" stroke-linejoin="round">
    <path d="M1801,146.5 L1823,132 L1858,142 L1837,156.5 Z"/>
    <path d="M1799,159 L1831,168.5 L1831,200 L1799,190 Z"/>
    <path d="M1845,165 L1864,152 L1864,185 L1845,198 Z"/>
  </g>
  <g fill="#fff"><circle cx="1796" cy="150" r="3.2"/><circle cx="1838" cy="162" r="4.5"/><circle cx="1834" cy="204" r="3.2"/><circle cx="1866" cy="142" r="2.5"/></g>
  <text x="0" y="0" font-family="Liberation Sans" font-size="8.5" font-style="italic" fill="#333" transform="translate(1822.5,137.5) rotate(22)">Top</text>
  <text x="0" y="0" font-family="Liberation Sans" font-size="11.5" fill="#222" transform="translate(1802.5,177) rotate(13)">Front</text>
  <text x="0" y="0" font-family="Liberation Sans" font-size="8.5" font-style="italic" fill="#333" transform="translate(1853,183) rotate(-58)">Right</text>
  <!-- axes -->
  <path d="M1788.6,197.5 V148" stroke="#2020c0" stroke-width="1.3"/>
  <path d="M1788.6,197.5 L1839.5,213.2" stroke="#d42a2a" stroke-width="1.3"/>
  <path d="M1788.6,197.5 L1818,174" stroke="#49a842" stroke-width="0.9"/>
  <text x="1788.6" y="143" font-family="Liberation Sans" font-weight="bold" font-size="10" fill="#2424c8" text-anchor="middle">Z</text>
  <text x="1848" y="219" font-family="Liberation Sans" font-weight="bold" font-size="10" fill="#d42a2a" text-anchor="middle">X</text>
  <text x="1822" y="170" font-family="Liberation Sans" font-size="7" fill="#9dc79a" text-anchor="middle">Y</text>
  <!-- small cube view icon -->
  <path d="M1875.2,223.5 l8.5,2.5 v9.5 l-8.5,4 l-8.5,-3 v-9.5z" fill="#bbb" stroke="#444" stroke-width="1"/>
  <path d="M1866.7,226 l8.5,3 l8.5,-3" fill="none" stroke="#444" stroke-width="1"/>
  <path d="M1875.2,229 v10.5 l8.5,-4 v-9.5z" fill="#eee" stroke="#444" stroke-width="1"/>
  <path d="M1866.7,226 l8.5,-2.5 l8.5,2.5 l-8.5,3z" fill="#e8e8e8" stroke="#444" stroke-width="1"/>
  <path d="M1892,230 h7.5 l-3.75,3.5z" fill="#333"/>
</svg>

</body></html>
